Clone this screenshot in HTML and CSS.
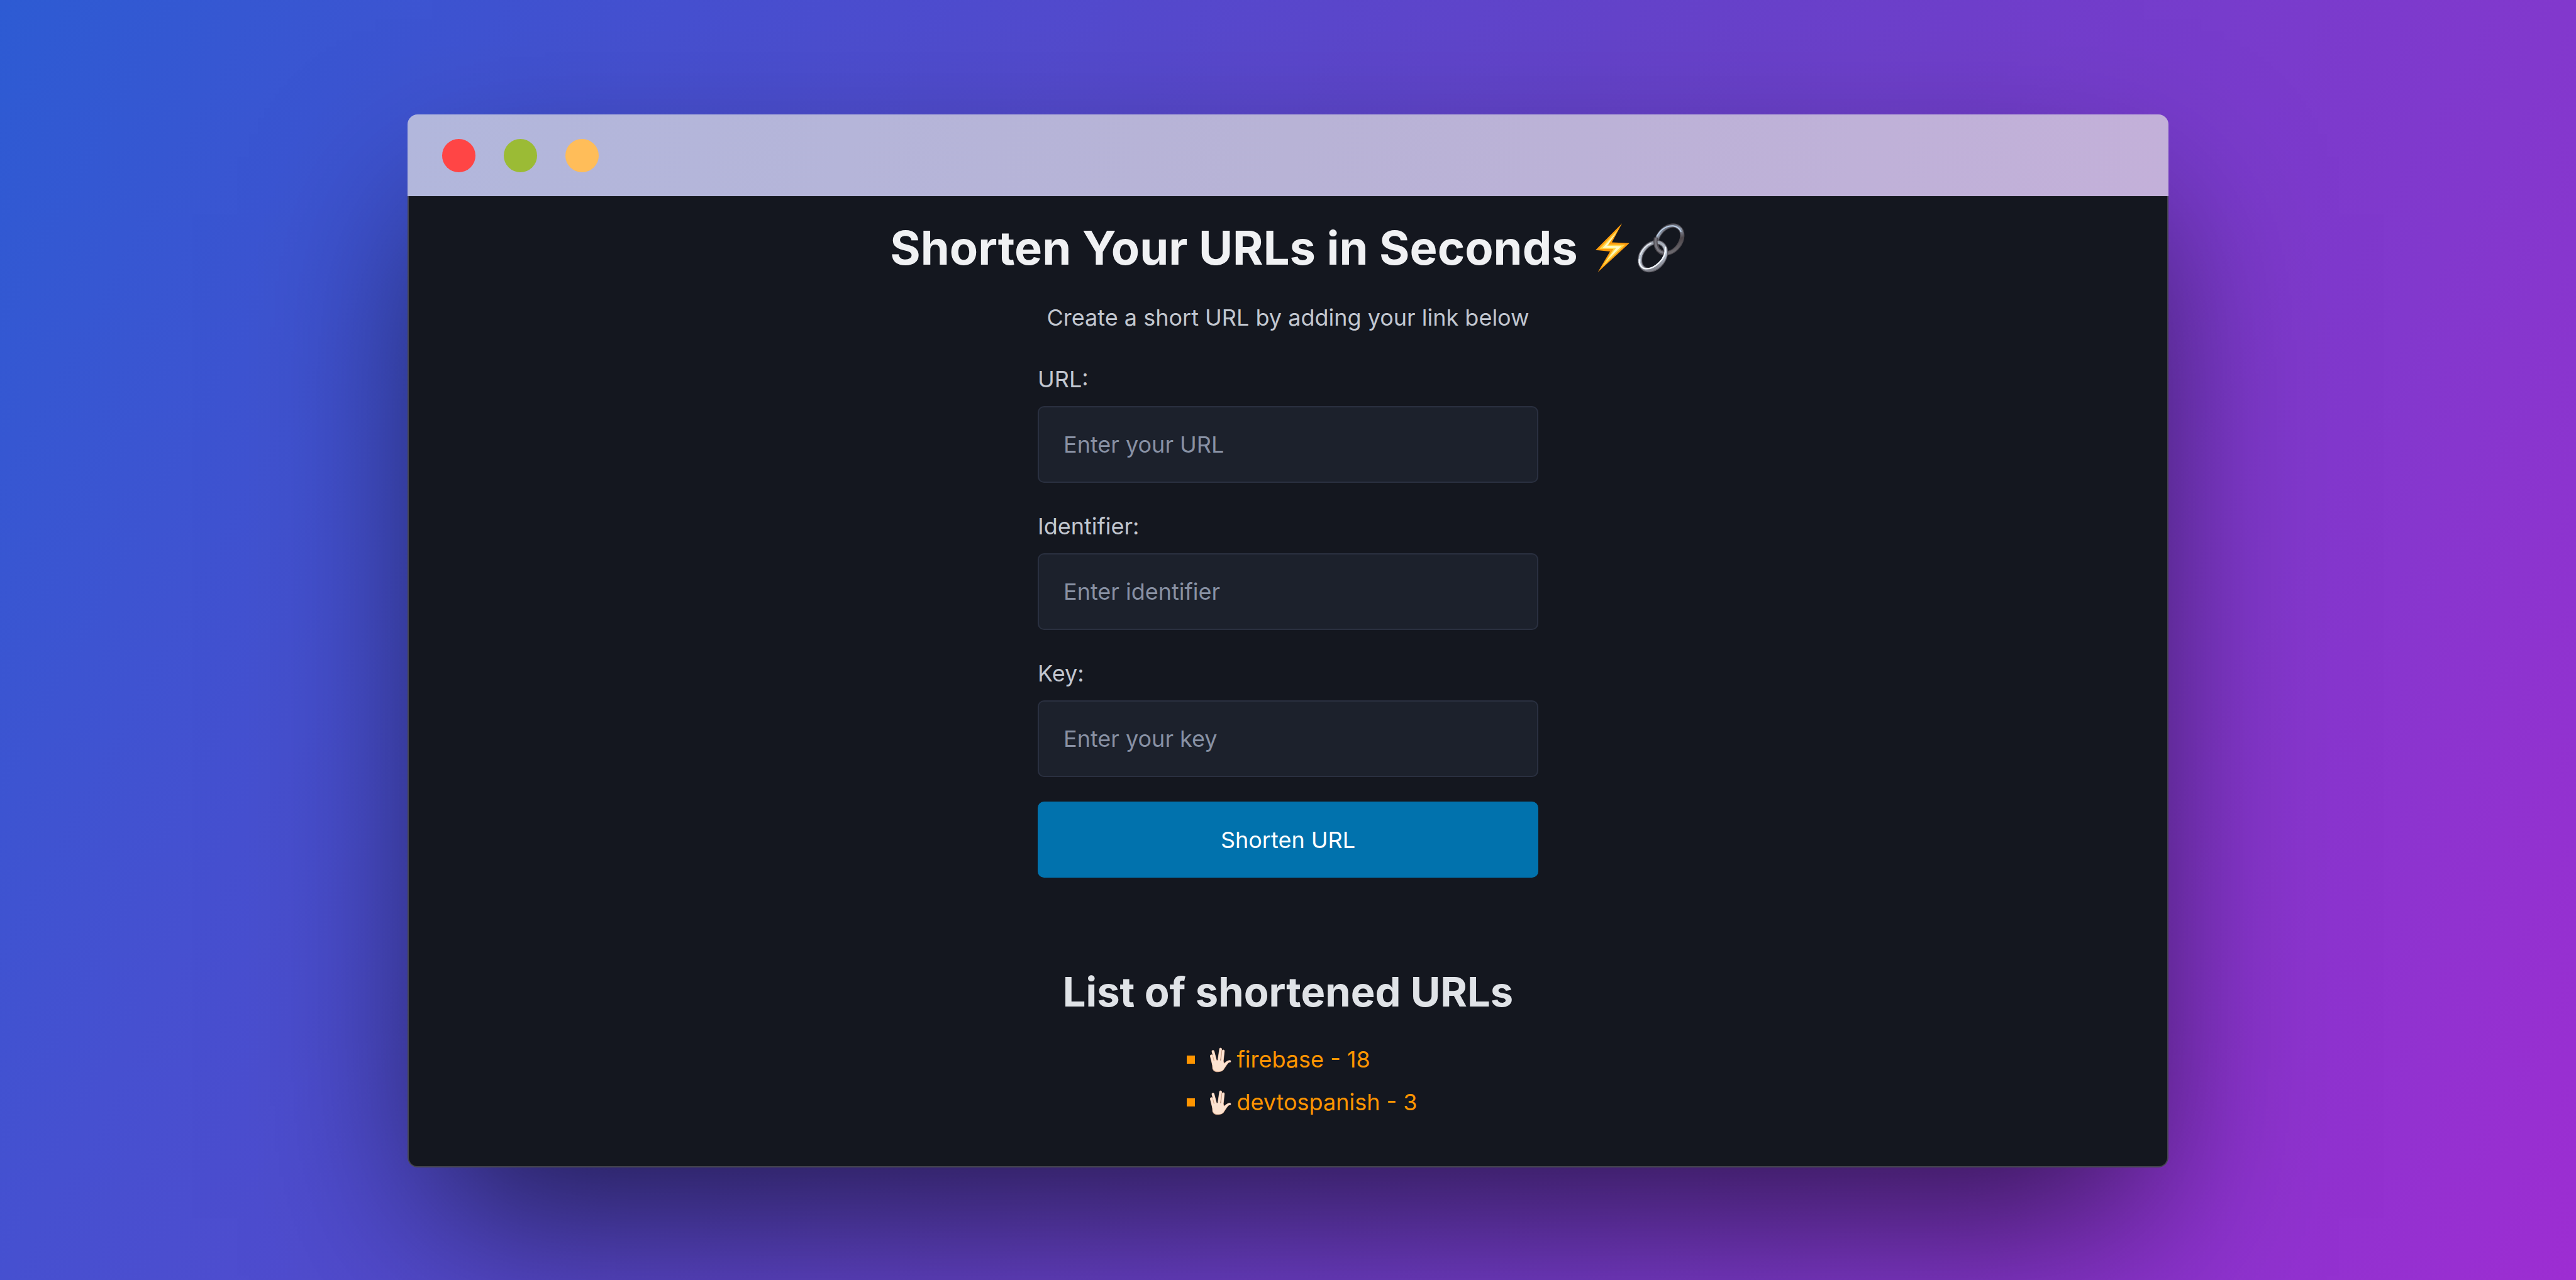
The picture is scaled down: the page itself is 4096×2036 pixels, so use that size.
FILE: index.html
```html
<!DOCTYPE html>
<html lang="en">
<head>
<meta charset="utf-8">
<meta name="viewport" content="width=device-width, initial-scale=1">
<title>Shorten Your URLs in Seconds</title>
<link rel="stylesheet" href="styles.css">
</head>
<body>
<svg class="symbols" aria-hidden="true">
  <defs>
    <linearGradient id="skin" x1="0" y1="0" x2="0" y2="1">
      <stop offset="0" stop-color="#fbe3d3"/>
      <stop offset="1" stop-color="#fde2cd"/>
    </linearGradient>
    <symbol id="salute" viewBox="172 54 112 126">
      <g fill="none" stroke="#d8ab90" stroke-linecap="round" stroke-linejoin="round">
        <path stroke-width="14" d="M184 99L194 140M192 77L206 130M229 66L220 128M242 75L236 130"/>
        <path stroke-width="12" d="M274 125Q262 124 244 146"/>
      </g>
      <path fill="#d8ab90" d="M186 128Q212 112 243 124L248 136Q262 130 270 130Q258 144 250 158Q240 178 217 178Q196 178 189 162Z"/>
      <g fill="none" stroke="#fde3d1" stroke-linecap="round" stroke-linejoin="round">
        <path stroke-width="11" d="M184 99L194 140M192 77L206 130M229 66L220 128M242 75L236 130"/>
        <path stroke-width="9" d="M274 125Q262 124 244 146"/>
      </g>
      <path fill="url(#skin)" d="M188 126Q212 118 241 122L246 140Q258 134 268 130Q256 142 248 157Q239 175 217 175Q198 175 191 160Z"/>
      <path fill="none" stroke="#d8ab90" stroke-width="2" d="M191 101L197 124M235 80L229 120"/>
    </symbol>
  </defs>
</svg>

<main class="window">
  <header class="titlebar" aria-hidden="true">
    <span class="dot dot-red"></span>
    <span class="dot dot-green"></span>
    <span class="dot dot-amber"></span>
  </header>

  <div class="content">
    <h1 class="title">
      Shorten Your URLs in Seconds
      <svg class="title-icons" viewBox="45 38 450 250" role="img" aria-label="Lightning and link">
        <defs>
          <linearGradient id="bolt" x1="0" y1="0" x2="1" y2="0">
            <stop offset="0" stop-color="#ff9c0a"/>
            <stop offset="1" stop-color="#f99a0e"/>
          </linearGradient>
          <linearGradient id="steel-a" x1="0" y1="0" x2="1" y2="1">
            <stop offset="0" stop-color="#3b3a42"/>
            <stop offset=".3" stop-color="#8f9aab"/>
            <stop offset=".55" stop-color="#4d464a"/>
            <stop offset="1" stop-color="#77777d"/>
          </linearGradient>
          <linearGradient id="steel-b" x1="0" y1="0" x2="1" y2="1">
            <stop offset="0" stop-color="#8a8e98"/>
            <stop offset=".5" stop-color="#c2ccda"/>
            <stop offset="1" stop-color="#66656d"/>
          </linearGradient>
        </defs>
        <path fill="url(#bolt)" d="M181 42L131 135L217 139L62 282L122 180L51 173Z"/>
        <path fill="#ffd84a" d="M167 66L114 146L196 147L82 256L139 168L70 167Z"/>
        <path fill="#fff9c4" d="M155 86L108 152L178 154L104 226L152 162L86 162Z"/>
        <g fill="none">
          <ellipse cx="413" cy="121" rx="55" ry="75" transform="rotate(38 413 121)" stroke="#4a464c" stroke-width="22"/>
          <ellipse cx="413" cy="121" rx="55" ry="75" transform="rotate(38 413 121)" stroke="url(#steel-a)" stroke-width="14"/>
          <path d="M352 105Q382 52 432 54Q458 58 470 82" stroke="#b9cbe2" stroke-width="6" stroke-linecap="round"/>
          <ellipse cx="332" cy="203" rx="55" ry="75" transform="rotate(38 332 203)" stroke="#5c5a62" stroke-width="22"/>
          <ellipse cx="332" cy="203" rx="55" ry="75" transform="rotate(38 332 203)" stroke="url(#steel-b)" stroke-width="14"/>
          <path d="M266 220Q262 250 288 263Q325 272 362 236Q398 200 394 160" stroke="#f4f8ff" stroke-width="7" stroke-linecap="round"/>
          <path d="M270 195Q288 154 322 140" stroke="#e6eaf0" stroke-width="6" stroke-linecap="round"/>
          <path d="M347 112Q340 150 358 172Q370 184 386 187" stroke="#4a464c" stroke-width="20"/>
          <path d="M347 112Q340 150 358 172Q370 184 386 187" stroke="#77767e" stroke-width="11"/>
        </g>
      </svg>
    </h1>
    <p class="subtitle">Create a short URL by adding your link below</p>

    <form class="form">
      <div class="field">
        <label for="url">URL:</label>
        <input id="url" type="text" placeholder="Enter your URL">
      </div>
      <div class="field">
        <label for="identifier">Identifier:</label>
        <input id="identifier" type="text" placeholder="Enter identifier">
      </div>
      <div class="field">
        <label for="key">Key:</label>
        <input id="key" type="text" placeholder="Enter your key">
      </div>
      <button class="submit" type="button">Shorten URL</button>
    </form>

    <h2 class="list-title">List of shortened URLs</h2>
    <ul class="links">
      <li><svg class="hand" aria-hidden="true"><use href="#salute"/></svg><a href="#firebase">firebase - 18</a></li>
      <li><svg class="hand" aria-hidden="true"><use href="#salute"/></svg><a href="#devtospanish">devtospanish - 3</a></li>
    </ul>
  </div>
</main>
</body>
</html>
```
FILE: styles.css
```css
* {
  box-sizing: border-box;
}

body {
  margin: 0;
  min-height: 100vh;
  padding: 182px 648px;
  background:
    linear-gradient(118deg, #2d5bd3 0%, #4650d0 21%, #6443ca 50%, #8238cd 79%, #9d2dd2 100%);
  color: #c2c7d0;
  font-family: Inter, "Liberation Sans", sans-serif;
  font-size: 36px;
  line-height: 60px;
}

.symbols {
  position: absolute;
  width: 0;
  height: 0;
}

.window {
  border-radius: 16px;
  box-shadow: 0 120px 460px -40px rgba(0, 0, 0, 0.62);
}

.titlebar {
  display: flex;
  align-items: center;
  gap: 45px;
  height: 130px;
  padding: 0 55px;
  border-radius: 16px 16px 0 0;
  background: linear-gradient(100deg, #b2b7dc, #b8b3d6 50%, #c3b0d9);
}

.dot {
  width: 53px;
  height: 53px;
  border-radius: 50%;
}

.dot-red {
  background: #ff4545;
}

.dot-green {
  background: #9bbb35;
}

.dot-amber {
  background: #ffbd59;
}

.content {
  display: flex;
  flex-direction: column;
  align-items: center;
  padding: 34px 40px 68px;
  border: 2px solid #45454f;
  border-top: 0;
  border-radius: 0 0 16px 16px;
  background: #14171f;
}

.title {
  display: flex;
  align-items: center;
  gap: 26px;
  margin: 0 0 33px;
  color: #f0f1f3;
  font-size: 74px;
  font-weight: 700;
  line-height: 96px;
}

.title-icons {
  width: 146px;
  height: 81px;
}

.subtitle {
  margin: 0 0 38px;
}

.form {
  display: flex;
  flex-direction: column;
  gap: 39px;
  width: 100%;
  max-width: 796px;
  margin-bottom: 140px;
}

.field {
  display: flex;
  flex-direction: column;
  gap: 13px;
}

.field input {
  width: 100%;
  height: 122px;
  padding: 0 39px;
  border: 2px solid #2a3040;
  border-radius: 10px;
  background: #1c212c;
  color: #e0e3e7;
  font: inherit;
}

.field input::placeholder {
  color: #8891a4;
  opacity: 1;
}

.submit {
  height: 121px;
  border: 0;
  border-radius: 10px;
  background: #0172ad;
  color: #fff;
  font: inherit;
}

.list-title {
  margin: 0 0 31px;
  color: #e0e3e7;
  font-size: 65px;
  font-weight: 700;
  line-height: 84px;
}

.links {
  margin: 0;
  padding: 0 0 0 45px;
  color: #ff9500;
  line-height: 68px;
  list-style: none;
}

.links li {
  display: flex;
  align-items: center;
}

.links li::before {
  content: "";
  width: 13px;
  height: 13px;
  margin-right: 22px;
  background: #ff9500;
}

.hand {
  width: 37px;
  height: 41px;
  margin-right: 7px;
}

.links a {
  color: inherit;
  text-decoration: none;
}
```
